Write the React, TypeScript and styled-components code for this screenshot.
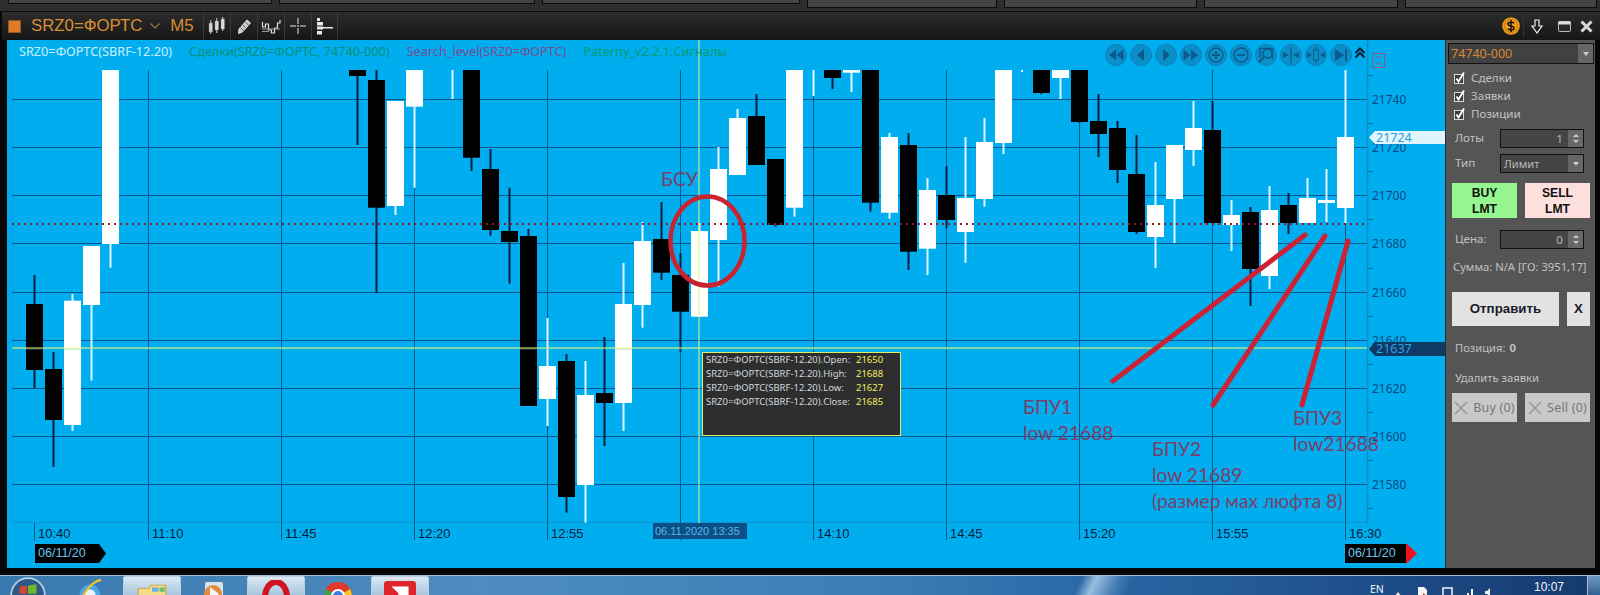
import React from "react";
import styled, { createGlobalStyle } from "styled-components";

const Global = createGlobalStyle`
  html, body { margin: 0; padding: 0; background: #050505; overflow: hidden; }
  #root { width: 1600px; height: 595px; }
  * { box-sizing: border-box; }
`;

const Page = styled.div`
  width: 1600px; height: 595px; display: flex; flex-direction: column;
  font-family: "Noto Sans", "Liberation Sans", sans-serif; background: #070707; overflow: hidden;
`;

const TopStrip = styled.div`
  height: 12px; flex: none; display: flex; gap: 7px; padding: 0 3px 0 8px;
  background: linear-gradient(#2e2e2e 0 11px, #0b0b0b 11px);
`;
const TopTab = styled.div<{ $w: number; $h: number }>`
  width: ${p => p.$w}px; height: ${p => p.$h}px; background: #444; border: 1px solid #0b0b0b; border-top: none;
`;

const TitleBar = styled.div`
  height: 28px; flex: none; display: flex; align-items: center; padding-left: 8px;
  margin: 0 0 0 2px; background: linear-gradient(#2c2c2c, #161616);
`;
const OrangeSquare = styled.span`
  width: 13px; height: 13px; margin-left: -2px; background: #e07a25; border: 1px solid #8a5a2a; flex: none;
`;
const Symbol = styled.span`
  font-family: "Liberation Sans", sans-serif; font-size: 16.8px; color: #d98f35; margin-left: 10px; line-height: 28px; white-space: nowrap;
`;
const Chevron = styled.svg`
  width: 12px; height: 8px; margin-left: 7px; flex: none;
`;
const Period = styled(Symbol)`
  margin-left: 9px; width: 33px; flex: none;
`;
const ToolSlot = styled.span`
  width: 27px; height: 26px; border-left: 1px solid #3a3a3a; display: flex; align-items: center; justify-content: center; flex: none;
  &:last-of-type { border-right: 1px solid #3a3a3a; }
`;
const TitleSpacer = styled.div` flex: 1; `;
const WinControls = styled.div`
  display: flex; align-items: center; height: 28px; padding-right: 7px;
`;
const ControlDivider = styled.span`
  width: 1px; height: 22px; background: #333; margin: 0 7px 0 3px;
`;
const ControlIcon = styled.svg<{ $gap?: number }>`
  margin-left: ${p => p.$gap ?? 0}px; flex: none;
`;

const WindowBody = styled.div`
  display: flex; height: 528px; padding-left: 7px; flex: none;
`;
const ChartPane = styled.div`
  position: relative; width: 1438px; height: 528px; background: #00aeef; flex: none; overflow: hidden;
`;
const ChartSvg = styled.svg`
  display: block; width: 1438px; height: 528px;
  text { font-family: "Noto Sans", sans-serif; }
`;
const PriceLabel = styled.text`
  font-size: 12px; fill: #0c4a80;
`;
const TimeLabel = styled.text`
  font-size: 13px; fill: #0a1e3c; font-family: "Liberation Sans", sans-serif !important;
`;

const Legend = styled.div`
  position: absolute; left: 12px; top: 3px; display: flex; gap: 17px; white-space: nowrap; font-size: 12.7px; line-height: 17px;
`;
const LegendItem = styled.span<{ $c: string }>` color: ${p => p.$c}; `;

const NavBar = styled.div`
  position: absolute; left: 1098px; top: 4px; display: flex; gap: 3px;
`;
const NavButton = styled.span`
  width: 22px; height: 22px; border-radius: 50%; background: #0b8fc9; border: 1px solid #0d82b8; display: flex; align-items: center; justify-content: center;
`;
const NavGlyph = styled.svg` width: 18px; height: 18px; `;
const Collapse = styled.svg`
  position: absolute; left: 1347px; top: 7px; width: 12px; height: 12px;
`;
const ScaleBox = styled.svg`
  position: absolute; left: 1365px; top: 13px; width: 13px; height: 15px;
`;

const PriceTag = styled.div<{ $top: number; $bg: string; $fg: string; $h: number }>`
  position: absolute; left: 1362px; top: ${p => p.$top}px; width: 76px; height: ${p => p.$h}px; background: ${p => p.$bg}; color: ${p => p.$fg};
  font-size: 12.5px; line-height: ${p => p.$h}px; padding-left: 7px;
  clip-path: polygon(0 50%, 6px 0, 100% 0, 100% 100%, 6px 100%);
`;

const Tooltip = styled.div`
  position: absolute; left: 695px; top: 312px; width: 199px; height: 84px; background: #2e2e2e; border: 1px solid #dcf06e;
  padding: 0 3px; display: flex; flex-direction: column; font-size: 9.5px; line-height: 14px; color: #cfd8de;
`;
const TooltipRow = styled.div`
  display: flex; height: 14px; white-space: nowrap;
`;
const TooltipName = styled.span` width: 150px; flex: none; `;
const TooltipValue = styled.span` color: #f2ef5c; `;

const Note = styled.div<{ $x: number; $y: number }>`
  position: absolute; left: ${p => p.$x - 7}px; top: ${p => p.$y - 40}px; color: #7c3f68;
  font-family: Lato, "Noto Sans", sans-serif; font-size: 19.2px; line-height: 26px; white-space: nowrap;
`;

const DateTag = styled.div<{ $x: number; $w: number }>`
  position: absolute; left: ${p => p.$x - 7}px; top: 504px; width: ${p => p.$w}px; height: 19px; background: #000;
  color: #6ec6ee; font-family: "Liberation Sans", sans-serif; font-size: 12.5px; line-height: 19px; padding-left: 3px;
`;
const DateTagLeft = styled(DateTag)`
  clip-path: polygon(0 0, calc(100% - 7px) 0, 100% 50%, calc(100% - 7px) 100%, 0 100%);
`;
const DateArrow = styled.span`
  position: absolute; left: 1399px; top: 503px; width: 11px; height: 21px; background: #ee1122;
  clip-path: polygon(0 0, 100% 50%, 0 100%);
`;
const CursorTime = styled.div`
  position: absolute; left: 646px; top: 483px; width: 94px; height: 16px; background: #0b4f87; color: #5ab6e8;
  font-family: "Liberation Sans", sans-serif; font-size: 11px; line-height: 16px; padding-left: 2px; white-space: nowrap;
`;

const SidePanel = styled.aside`
  width: 150px; flex: none; height: 528px; background: #555; border-left: 1px solid #2a2a2a; display: flex; flex-direction: column;
  padding: 3px 0 0 1px; font-family: "Noto Sans", sans-serif; font-size: 11.2px; color: #c2c2c2;
`;
const AccountSelect = styled.div`
  width: 146px; height: 21px; margin-left: 1px; background: #414141; border: 1px solid #111; color: #d98a35; display: flex;
  font-size: 12.5px; line-height: 19px; padding-left: 2px; justify-content: space-between;
`;
const ArrowCell = styled.span<{ $w: number }>`
  width: ${p => p.$w}px; height: 100%; background: #666; display: flex; align-items: center; justify-content: center; flex: none;
  &::after { content: ""; border: 3.5px solid transparent; border-top: 4px solid #ccc; border-bottom: none; }
`;
const Checks = styled.div`
  margin-top: 4px; padding-left: 7px; display: flex; flex-direction: column;
`;
const CheckRow = styled.label`
  height: 18px; display: flex; align-items: center; gap: 6px; font-size: 11.6px;
`;
const CheckSvg = styled.svg` width: 11px; height: 13px; flex: none; `;
const FieldRow = styled.div<{ $mt: number }>`
  display: flex; align-items: center; height: 19px; margin-top: ${p => p.$mt}px; padding-left: 8px;
`;
const FieldLabel = styled.span`
  width: 45px; flex: none; font-size: 11.6px; margin-top: -2px;
`;
const SpinField = styled.div`
  width: 84px; height: 19px; background: #454545; border: 1px solid #111; display: flex; justify-content: flex-end; font-size: 11.6px;
  line-height: 17px; color: #b8b8b8;
`;
const SpinValue = styled.span` padding-right: 5px; `;
const Spinner = styled.span`
  width: 15px; background: #686868; display: flex; flex-direction: column; align-items: center; justify-content: center; gap: 3px; flex: none;
  &::before { content: ""; border: 3px solid transparent; border-bottom: 3px solid #ccc; border-top: none; }
  &::after { content: ""; border: 3px solid transparent; border-top: 3px solid #ccc; border-bottom: none; }
`;
const SelectField = styled.div`
  width: 84px; height: 19px; background: #454545; border: 1px solid #111; display: flex; justify-content: space-between; padding-left: 3px;
  color: #b8b8b8; font-size: 11.2px; line-height: 17px;
`;
const ButtonRow = styled.div<{ $mt: number }>`
  display: flex; gap: 8px; padding-left: 5px; margin-top: ${p => p.$mt}px;
`;
const SideButton = styled.div<{ $bg: string; $w: number; $h: number }>`
  width: ${p => p.$w}px; height: ${p => p.$h}px; background: ${p => p.$bg}; display: flex; align-items: center; justify-content: center;
  text-align: center; font-family: "Liberation Sans", sans-serif; font-weight: 700; font-size: 12.2px; line-height: 16px; color: #111;
`;
const SendButton = styled(SideButton)`
  font-size: 13.3px; color: #1a1a2c;
`;
const CancelButton = styled(SideButton)`
  font-family: "Noto Sans", sans-serif; font-weight: 400; font-size: 12.5px; color: #777; gap: 5px; letter-spacing: .2px;
`;
const TextRow = styled.div<{ $mt: number; $pl: number }>`
  height: 18px; line-height: 18px; margin-top: ${p => p.$mt}px; padding-left: ${p => p.$pl}px; white-space: nowrap;
`;
const Bold = styled.b` margin-left: 4px; `;

const Footer = styled.div` height: 7px; flex: none; background: #060606; `;

const Taskbar = styled.div`
  position: relative; height: 20px; flex: none; display: flex; align-items: flex-start; overflow: hidden; border-top: 1px solid #9fbad0;
  background:
    linear-gradient(115deg, transparent 67.3%, rgba(190,220,245,.75) 68.2%, rgba(190,220,245,.2) 69.6%, transparent 70.5%),
    linear-gradient(90deg, #3a79ae 0%, #4e8cc0 30%, #3d7db6 55%, #2a68a6 68%, #1e4f8c 85%, #16396c 100%);
`;
const StartSlot = styled.div`
  width: 60px; height: 20px; flex: none; display: flex; justify-content: center; padding-top: 1px; margin-left: -2px;
`;
const TaskSlot = styled.div<{ $w: number; $active?: boolean }>`
  width: ${p => p.$w}px; height: 20px; flex: none; display: flex; justify-content: center; padding-top: 3px; margin-right: 1px;
  border-radius: 2px 2px 0 0;
  background: ${p => (p.$active ? "linear-gradient(#dbe8f2, #a9c6dd)" : "transparent")};
  border: ${p => (p.$active ? "1px solid #b9d0e2" : "none")};
`;
const TaskIcon = styled.svg<{ $s?: number }>` width: ${p => p.$s ?? 30}px; height: ${p => p.$s ?? 30}px; flex: none; `;
const Tray = styled.div`
  margin-left: auto; display: flex; align-items: flex-start; height: 20px; padding-top: 8px; color: #eef4fa; font-size: 10.5px;
`;
const TrayLabel = styled.span` line-height: 11px; width: 16px; margin-right: 9px; `;
const TraySvg = styled.svg` width: 105px; height: 9px; margin-top: 3px; flex: none; margin-right: 34px; `;
const Clock = styled.span`
  font-family: "Liberation Sans", sans-serif; font-size: 12px; line-height: 14px; margin-top: -4.5px; width: 53px; color: #f2f6fa;
`;
const ShowDesktop = styled.span`
  width: 13px; height: 20px; margin-top: -8px; background: linear-gradient(#6e98be, #2f5f92); border-left: 1px solid #a5c0d6;
`;

type C = [number, "b" | "w", number, number, number, number];
const candles: C[] = [
  [0, "b", 304, 370, 275, 388], [1, "b", 369, 420, 352, 467], [2, "w", 300.7, 425, 294, 431], [3, "w", 246, 305, 246, 380.7], [4, "w", 70, 244, 70, 267.7],
  [17, "b", 70, 76, 70, 145], [18, "b", 80, 207.7, 70, 293], [19, "w", 101, 206, 101, 215], [20, "w", 70, 106.7, 70, 187.7],
  [22, "w", 70, 70, 70, 99], [23, "b", 70, 157.7, 70, 171], [24, "b", 169, 230, 149, 235.7], [25, "b", 231, 242, 187.7, 283.7], [26, "b", 236, 406, 229, 406],
  [27, "w", 366, 399, 318, 426], [28, "b", 361, 497, 354, 512.7], [29, "w", 395, 485, 361, 522.7], [30, "b", 393, 403, 337, 446], [31, "w", 304, 403, 263, 431],
  [32, "w", 241, 305, 222, 327.7], [33, "b", 239, 272.7, 202, 280], [34, "b", 275, 311.7, 253, 351.7], [35, "w", 231, 316.7, 223, 316.7], [36, "w", 169, 240, 147, 286.7],
  [37, "w", 118, 175, 109, 175], [38, "b", 116, 165, 94, 165], [39, "b", 159, 225, 159, 226.7], [40, "w", 70, 207.7, 70, 216.7], [41, "w", 70, 70, 70, 96],
  [42, "b", 70, 78, 70, 89], [43, "w", 70, 72.7, 70, 92], [44, "b", 70, 202.7, 70, 211.7], [45, "w", 137, 212.7, 133, 218.7], [46, "b", 145, 251.7, 133, 270],
  [47, "w", 190, 248.7, 178, 275], [48, "b", 195, 220, 166, 228], [49, "w", 198, 232, 137, 262.7], [50, "w", 142, 199, 118, 206.7], [51, "w", 70, 143, 70, 154],
  [53, "b", 70, 93, 70, 94], [54, "w", 70, 78, 70, 99], [55, "b", 70, 122, 70, 123], [56, "b", 121, 134, 94, 157], [57, "b", 128, 170, 121, 183],
  [58, "b", 174, 232, 135, 234], [59, "w", 205, 237, 162, 268], [60, "w", 145, 199, 145, 243], [61, "w", 128, 150, 101, 166], [62, "b", 130, 223, 101, 223],
  [63, "w", 215, 225, 200, 251], [64, "b", 212, 269, 207, 306], [65, "w", 210, 276, 186, 289], [66, "b", 205, 223, 193, 234], [67, "w", 198, 223, 178, 223],
  [68, "w", 200, 203, 169, 222], [69, "w", 137, 208, 70, 223],
];

const hLines = [99.5, 147.5, 195.5, 243.5, 292.5, 340.5, 388.5, 436.5, 484.5];
const hLabels = ["21740", "21720", "21700", "21680", "21660", "21640", "21620", "21600", "21580"];
const vLines = [148.5, 281.5, 414.5, 547.5, 680.5, 813.5, 946.5, 1079.5, 1212.5, 1345.5];
const vLabels = ["11:10", "11:45", "12:20", "12:55", "", "14:10", "14:45", "15:20", "15:55", "16:30"];
const minor = [75.5, 123.5, 171.5, 219.5, 268.5, 316.5, 364.5, 412.5, 460.5, 508.5];

const Chart = () => (
  <ChartSvg viewBox="7 40 1438 528">
    <line x1={12.5} x2={12.5} y1={68} y2={523} stroke="#0f97d2" />
    <line x1={1367.5} x2={1367.5} y1={40} y2={523} stroke="#0f8fc8" strokeWidth={1.5} />
    <line x1={12} x2={1367} y1={522.5} y2={522.5} stroke="#0f97d2" strokeWidth={1.5} />
    {hLines.map(y => <line key={y} x1={12} x2={1367} y1={y} y2={y} stroke="#0e5688" />)}
    {vLines.map(x => <line key={x} x1={x} x2={x} y1={70} y2={540} stroke="#0e5688" />)}
    <line x1={34.5} x2={34.5} y1={523} y2={541} stroke="#0e5688" />
    {minor.map(y => <line key={y} x1={1367} x2={1373} y1={y} y2={y} stroke="#0f6d9e" />)}
    {hLines.map((y, i) => <PriceLabel key={y} x={1372} y={y + 4.5}>{hLabels[i]}</PriceLabel>)}
    <TimeLabel x={38} y={538}>10:40</TimeLabel>
    {vLines.map((x, i) => vLabels[i] && <TimeLabel key={x} x={x + 3.5} y={538}>{vLabels[i]}</TimeLabel>)}
    {candles.map(([i, t, bt, bb, wt, wb]) => {
      const left = 26 + 19 * i;
      return (
        <g key={i}>
          <rect x={left + 7.5} y={wt} width={2} height={wb - wt} fill={t === "b" ? "#0a1c3e" : "#dff6ff"} />
          {bb > bt && <rect x={left} y={bt} width={17} height={bb - bt} fill={t === "b" ? "#000" : "#fff"} />}
        </g>
      );
    })}
    <rect x={1021} y={70} width={2} height={2} fill="#dff6ff" />
    <line x1={12} x2={1367} y1={224} y2={224} stroke="#8c1c2c" strokeWidth={2} strokeDasharray="2 4" />
    <line x1={12} x2={1367} y1={349} y2={349} stroke="#2cc0a0" strokeOpacity={0.5} />
    <line x1={12} x2={1367} y1={348} y2={348} stroke="#f6fa84" />
    <line x1={699} x2={699} y1={40} y2={523} stroke="#e6f47a" />
    <ellipse cx={707.5} cy={241} rx={37} ry={44.500} fill="none" stroke="#c8232f" strokeWidth={4.500} />
    <line x1={1113} y1={381} x2={1305} y2={235} stroke="#cc2233" strokeWidth={5} strokeLinecap="round" />
    <line x1={1213} y1={405} x2={1325} y2={236} stroke="#cc2233" strokeWidth={5} strokeLinecap="round" />
    <line x1={1302} y1={405} x2={1348} y2={241} stroke="#cc2233" strokeWidth={5} strokeLinecap="round" />
  </ChartSvg>
);

const navGlyphs: React.ReactNode[] = [
  <path key="a" d="M9 3.500 2 9l7 5.500zM16.500 3.500 9.500 9l7 5.500z" fill="#0d5a8c" />,
  <path key="b" d="M12 3 5 9l7 6z" fill="#0d5a8c" />,
  <path key="c" d="M6 3 13 9l-7 6z" fill="#0d5a8c" />,
  <path key="d" d="M1.500 3.500 8.500 9l-7 5.500zM9 3.500 16 9l-7 5.500z" fill="#0d5a8c" />,
  <g key="e" fill="none" stroke="#0d5a8c"><circle cx={9} cy={9} r={7} strokeWidth={1.4} /><path d="M5 9h8M9 5v8" strokeWidth={1.8} /></g>,
  <g key="f" fill="none" stroke="#0d5a8c"><circle cx={9} cy={9} r={7} strokeWidth={1.4} /><path d="M5 9h8" strokeWidth={1.8} /></g>,
  <g key="g" fill="none" stroke="#0d5a8c" strokeWidth={1.5}><path d="M3 11V2.500h12.500" /><circle cx={10.500} cy={7.500} r={4.500} /><path d="m7 11-5 5" strokeWidth={2.4} /><path d="M15.500 2.500V13" /></g>,
  <g key="h" fill="#0d5a8c"><path d="M9 1v16" stroke="#0d5a8c" strokeWidth={1.3} /><path d="M1 6l6 3-6 3zM17 6l-6 3 6 3z" /></g>,
  <g key="i" fill="#0d5a8c"><path d="M9 1v16" stroke="#0d5a8c" strokeWidth={1.2} /><rect x={6.500} y={4} width={5} height={10} fill="#0b8fc9" stroke="#0d5a8c" /><path d="M0 6l5 3-5 3zM18 6l-5 3 5 3z" /></g>,
  <g key="j" fill="#0d5a8c"><path d="M3 3 12 9l-9 6z" /><rect x={13} y={3} width={2} height={12} /></g>,
];

const Check = () => (
  <CheckSvg viewBox="0 0 11 13">
    <rect x={.5} y={3.500} width={9} height={9} fill="#3d3d3d" stroke="#d8d8d8" />
    <path d="M2.500 7.500 4.500 10.500 10 1.500" fill="none" stroke="#fff" strokeWidth={1.9} />
  </CheckSvg>
);
const CrossIcon = () => (
  <svg width={14} height={14} viewBox="0 0 14 14"><path d="M1 1l12 12M13 1 1 13" stroke="#999" strokeWidth={1.6} /></svg>
);

export default function App() {
  return (
    <Page>
      <Global />
      <TopStrip>
        <TopTab $w={264} $h={4} /><TopTab $w={256} $h={4} /><TopTab $w={258} $h={4} /><TopTab $w={190} $h={8} /><TopTab $w={193} $h={8} /><TopTab $w={194} $h={8} /><TopTab $w={192} $h={8} />
      </TopStrip>
      <TitleBar>
        <OrangeSquare />
        <Symbol>SRZ0=ФОРТС</Symbol>
        <Chevron viewBox="0 0 12 8"><path d="M1.500 1.500 6 6l4.500-4.500" fill="none" stroke="#9a7a50" strokeWidth={1.1} /></Chevron>
        <Period>M5</Period>
        <ToolSlot>
          <svg width={18} height={20} viewBox="0 0 18 20" fill="none">
            <rect x={1} y={7} width={3.500} height={9} fill="#d8d8d8" stroke="#777" strokeWidth={.5} />
            <rect x={7} y={5} width={3.500} height={9} fill="#e8e8e8" stroke="#777" strokeWidth={.5} />
            <rect x={13} y={3} width={3.500} height={10} fill="#eee" stroke="#777" strokeWidth={.5} />
            <path d="M2.750 4v14M8.750 2v15M14.750 1v14" stroke="#ccc" />
          </svg>
        </ToolSlot>
        <ToolSlot>
          <svg width={16} height={18} viewBox="0 0 16 18" fill="none">
            <path d="M3 12 11 3l3.500 3-8 9-4 1.500z" fill="#c8c8c8" stroke="#eee" strokeWidth={.9} />
            <path d="M4.500 10.500 8 14M7 8l3.500 3.500M9.500 5.500 13 8.500" stroke="#555" strokeWidth={.8} />
          </svg>
        </ToolSlot>
        <ToolSlot>
          <svg width={20} height={18} viewBox="0 0 20 18" fill="none">
            <path d="M1.500 5v5h3V7h3v6h3v3h3v-5h3V6h2.500V3" stroke="#e2e2e2" strokeWidth={1.2} />
            <path d="M1 12h18" stroke="#aaa" /><path d="M1 14.500h7" stroke="#999" />
          </svg>
        </ToolSlot>
        <ToolSlot>
          <svg width={16} height={16} viewBox="0 0 16 16"><path d="M0 8h6M10 8h6M8 0v6M8 10v6" stroke="#e8e8e8" /><circle cx={8} cy={8} r={1} fill="#bbb" /></svg>
        </ToolSlot>
        <ToolSlot>
          <svg width={17} height={18} viewBox="0 0 17 18" fill="#e8e8e8"><rect x={1} y={1} width={3} height={3} /><rect x={1} y={5} width={6} height={3.500} /><rect x={1} y={9.500} width={6} height={3} /><rect x={7} y={10} width={10} height={1.500} /><rect x={1} y={14} width={5} height={3.500} /></svg>
        </ToolSlot>
        <TitleSpacer />
        <WinControls>
          <svg width={18} height={18} viewBox="0 0 18 18">
            <circle cx={9} cy={9} r={8.800} fill="#f09a1a" />
            <circle cx={9} cy={9} r={6.500} fill="none" stroke="#b96f0c" strokeWidth={.8} />
            <path d="M12 6.300C11 5 6 4.700 6 7c0 2.600 6 1.500 6 4.200 0 2.300-5 2-6.200.6M9 3v12" fill="none" stroke="#111" strokeWidth={1.5} />
          </svg>
          <ControlDivider />
          <ControlIcon width={12} height={15} viewBox="0 0 12 15"><path d="M4 1h4v6h3L6 14 1 7h3z" fill="none" stroke="#eee" strokeWidth={1.2} /></ControlIcon>
          <ControlIcon $gap={15} width={13} height={11} viewBox="0 0 13 11"><rect x={.5} y={.5} width={12} height={10} rx={1} fill="#2a2a2a" stroke="#bbb" /><rect x={.5} y={.5} width={12} height={3} fill="#ddd" /></ControlIcon>
          <ControlIcon $gap={9} width={13} height={13} viewBox="0 0 13 13"><path d="M1.500 1.500l10 10M11.500 1.500l-10 10" stroke="#d8d8d8" strokeWidth={3} /></ControlIcon>
        </WinControls>
      </TitleBar>
      <WindowBody>
        <ChartPane>
          <Chart />
          <Legend>
            <LegendItem $c="#c9eefa">SRZ0=ФОРТС(SBRF-12.20)</LegendItem>
            <LegendItem $c="#078f78">Сделки(SRZ0=ФОРТС, 74740-000)</LegendItem>
            <LegendItem $c="#7a4c90">Search_level(SRZ0=ФОРТС)</LegendItem>
            <LegendItem $c="#069a70">Paterny_v2.2.1.Сигналы</LegendItem>
          </Legend>
          <NavBar>
            {navGlyphs.map((g, i) => <NavButton key={i}><NavGlyph viewBox="0 0 18 18">{g}</NavGlyph></NavButton>)}
          </NavBar>
          <Collapse viewBox="0 0 12 12"><path d="M1.500 6 6 1.500 10.500 6M1.500 10.500 6 6l4.500 4.500" fill="none" stroke="#061a2c" strokeWidth={2} /></Collapse>
          <ScaleBox viewBox="0 0 13 15"><rect x={.5} y={.5} width={12} height={14} fill="none" stroke="#8a5a78" /><path d="M3.500 6 6.500 3l3 3M3.500 9l3 3 3-3" fill="none" stroke="#a0506a" /></ScaleBox>
          <PriceTag $top={91} $h={13} $bg="#dff5fd" $fg="#2a9cd8">21724</PriceTag>
          <PriceTag $top={302} $h={14} $bg="#0f3a66" $fg="#2ea2e0">21637</PriceTag>
          <Tooltip>
            <TooltipRow><TooltipName>SRZ0=ФОРТС(SBRF-12.20).Open:</TooltipName><TooltipValue>21650</TooltipValue></TooltipRow>
            <TooltipRow><TooltipName>SRZ0=ФОРТС(SBRF-12.20).High:</TooltipName><TooltipValue>21688</TooltipValue></TooltipRow>
            <TooltipRow><TooltipName>SRZ0=ФОРТС(SBRF-12.20).Low:</TooltipName><TooltipValue>21627</TooltipValue></TooltipRow>
            <TooltipRow><TooltipName>SRZ0=ФОРТС(SBRF-12.20).Close:</TooltipName><TooltipValue>21685</TooltipValue></TooltipRow>
          </Tooltip>
          <Note $x={661} $y={166}>БСУ</Note>
          <Note $x={1023} $y={394}>БПУ1<br />low 21688</Note>
          <Note $x={1152} $y={436}>БПУ2<br />low 21689<br />(размер мах люфта 8)</Note>
          <Note $x={1293} $y={405}>БПУ3<br />low21688</Note>
          <CursorTime>06.11.2020 13:35</CursorTime>
          <DateTagLeft $x={35} $w={71}>06/11/20</DateTagLeft>
          <DateTag $x={1345} $w={61}>06/11/20</DateTag>
          <DateArrow />
        </ChartPane>
        <SidePanel>
          <AccountSelect>74740-000<ArrowCell $w={15} /></AccountSelect>
          <Checks>
            <CheckRow><Check />Сделки</CheckRow>
            <CheckRow><Check />Заявки</CheckRow>
            <CheckRow><Check />Позиции</CheckRow>
          </Checks>
          <FieldRow $mt={7}>
            <FieldLabel>Лоты</FieldLabel>
            <SpinField><SpinValue>1</SpinValue><Spinner /></SpinField>
          </FieldRow>
          <FieldRow $mt={6}>
            <FieldLabel>Тип</FieldLabel>
            <SelectField>Лимит<ArrowCell $w={15} /></SelectField>
          </FieldRow>
          <ButtonRow $mt={10}>
            <SideButton $bg="#95f58f" $w={65} $h={35}>BUY<br />LMT</SideButton>
            <SideButton $bg="#fde0de" $w={65} $h={35}>SELL<br />LMT</SideButton>
          </ButtonRow>
          <FieldRow $mt={12}>
            <FieldLabel>Цена:</FieldLabel>
            <SpinField><SpinValue>0</SpinValue><Spinner /></SpinField>
          </FieldRow>
          <TextRow $mt={9} $pl={6}>Сумма: N/A [ГО: 3951,17]</TextRow>
          <ButtonRow $mt={16}>
            <SendButton $bg="#e2e2e2" $w={107} $h={34}>Отправить</SendButton>
            <SendButton $bg="#e2e2e2" $w={23} $h={34}>X</SendButton>
          </ButtonRow>
          <TextRow $mt={13} $pl={8}>Позиция:<Bold>0</Bold></TextRow>
          <TextRow $mt={12} $pl={8}>Удалить заявки</TextRow>
          <ButtonRow $mt={6}>
            <CancelButton $bg="#c8c8c8" $w={65} $h={29}><CrossIcon />Buy (0)</CancelButton>
            <CancelButton $bg="#c8c8c8" $w={65} $h={29}><CrossIcon />Sell (0)</CancelButton>
          </ButtonRow>
        </SidePanel>
      </WindowBody>
      <Footer />
      <Taskbar>
        <StartSlot>
          <TaskIcon $s={36} viewBox="0 0 30 30">
            <circle cx={15} cy={15} r={14} fill="#2b5a86" stroke="#b8cfe0" strokeWidth={1.500} />
            <path d="M8 8l6-1v7H8z" fill="#d9452c" /><path d="M15 7l7-1v8h-7z" fill="#6fb82e" />
          </TaskIcon>
        </StartSlot>
        <TaskSlot $w={64}>
          <TaskIcon $s={28} viewBox="0 0 30 30">
            <ellipse cx={15} cy={17} rx={11} ry={11} fill="#4aa6e8" />
            <circle cx={15} cy={17} r={6} fill="#eaf6ff" />
            <path d="M5 24C10 10 20 2 27 1" fill="none" stroke="#f2c12e" strokeWidth={2.500} />
          </TaskIcon>
        </TaskSlot>
        <TaskSlot $w={58} $active>
          <TaskIcon $s={32} viewBox="0 0 30 30">
            <path d="M2 8h10l2-3h14v24H2z" fill="#f5dc8a" stroke="#c9a84e" />
            <rect x={15} y={7} width={6} height={4} fill="#6fb0e0" /><rect x={22} y={7} width={5} height={4} fill="#6cc06c" />
          </TaskIcon>
        </TaskSlot>
        <TaskSlot $w={64}>
          <TaskIcon viewBox="0 0 30 30">
            <rect x={6} y={3} width={18} height={26} rx={2} fill="#d9e4ec" />
            <circle cx={14} cy={15} r={9} fill="#e38b3c" />
            <path d="M11 8l9 7-9 7z" fill="#f6f6f6" />
          </TaskIcon>
        </TaskSlot>
        <TaskSlot $w={58} $active>
          <TaskIcon viewBox="0 0 30 30"><ellipse cx={15} cy={17} rx={11} ry={15} fill="none" stroke="#d0131f" strokeWidth={6} /></TaskIcon>
        </TaskSlot>
        <TaskSlot $w={64}>
          <TaskIcon viewBox="0 0 30 30">
            <circle cx={15} cy={17} r={14} fill="#e0392c" />
            <path d="M15 17 27 10A14 14 0 0 1 15 31z" fill="#f6c51e" />
            <path d="M15 17 3 10A14 14 0 0 0 15 31z" fill="#3aa14a" />
            <circle cx={15} cy={17} r={6} fill="#3b7ddd" stroke="#fff" strokeWidth={2} />
          </TaskIcon>
        </TaskSlot>
        <TaskSlot $w={58} $active>
          <TaskIcon $s={32} viewBox="0 0 30 30">
            <rect x={0} y={1} width={30} height={29} rx={3} fill="#e0242c" />
            <path d="M7 6h16v16l-5-5-9 9-4-4 9-9z" fill="#fff" />
          </TaskIcon>
        </TaskSlot>
        <Tray>
          <TrayLabel>EN</TrayLabel>
          <TraySvg viewBox="0 0 105 9">
            <path d="M0 9h6L3 5z" fill="#eee" />
            <path d="M23 0h6l3 3v6h-9z" fill="#f4f4f4" /><path d="M28 6l4 3h-4z" fill="#d33" />
            <rect x={48} y={1} width={9} height={9} fill="none" stroke="#f4f4f4" strokeWidth={1.500} />
            <path d="M72 9V6h2v3zM76 9V2h2v7z" fill="#f4f4f4" />
            <path d="M90 4h2l3-3v8l-3-2h-2z" fill="#f4f4f4" />
          </TraySvg>
          <Clock>10:07</Clock>
          <ShowDesktop />
        </Tray>
      </Taskbar>
    </Page>
  );
}
